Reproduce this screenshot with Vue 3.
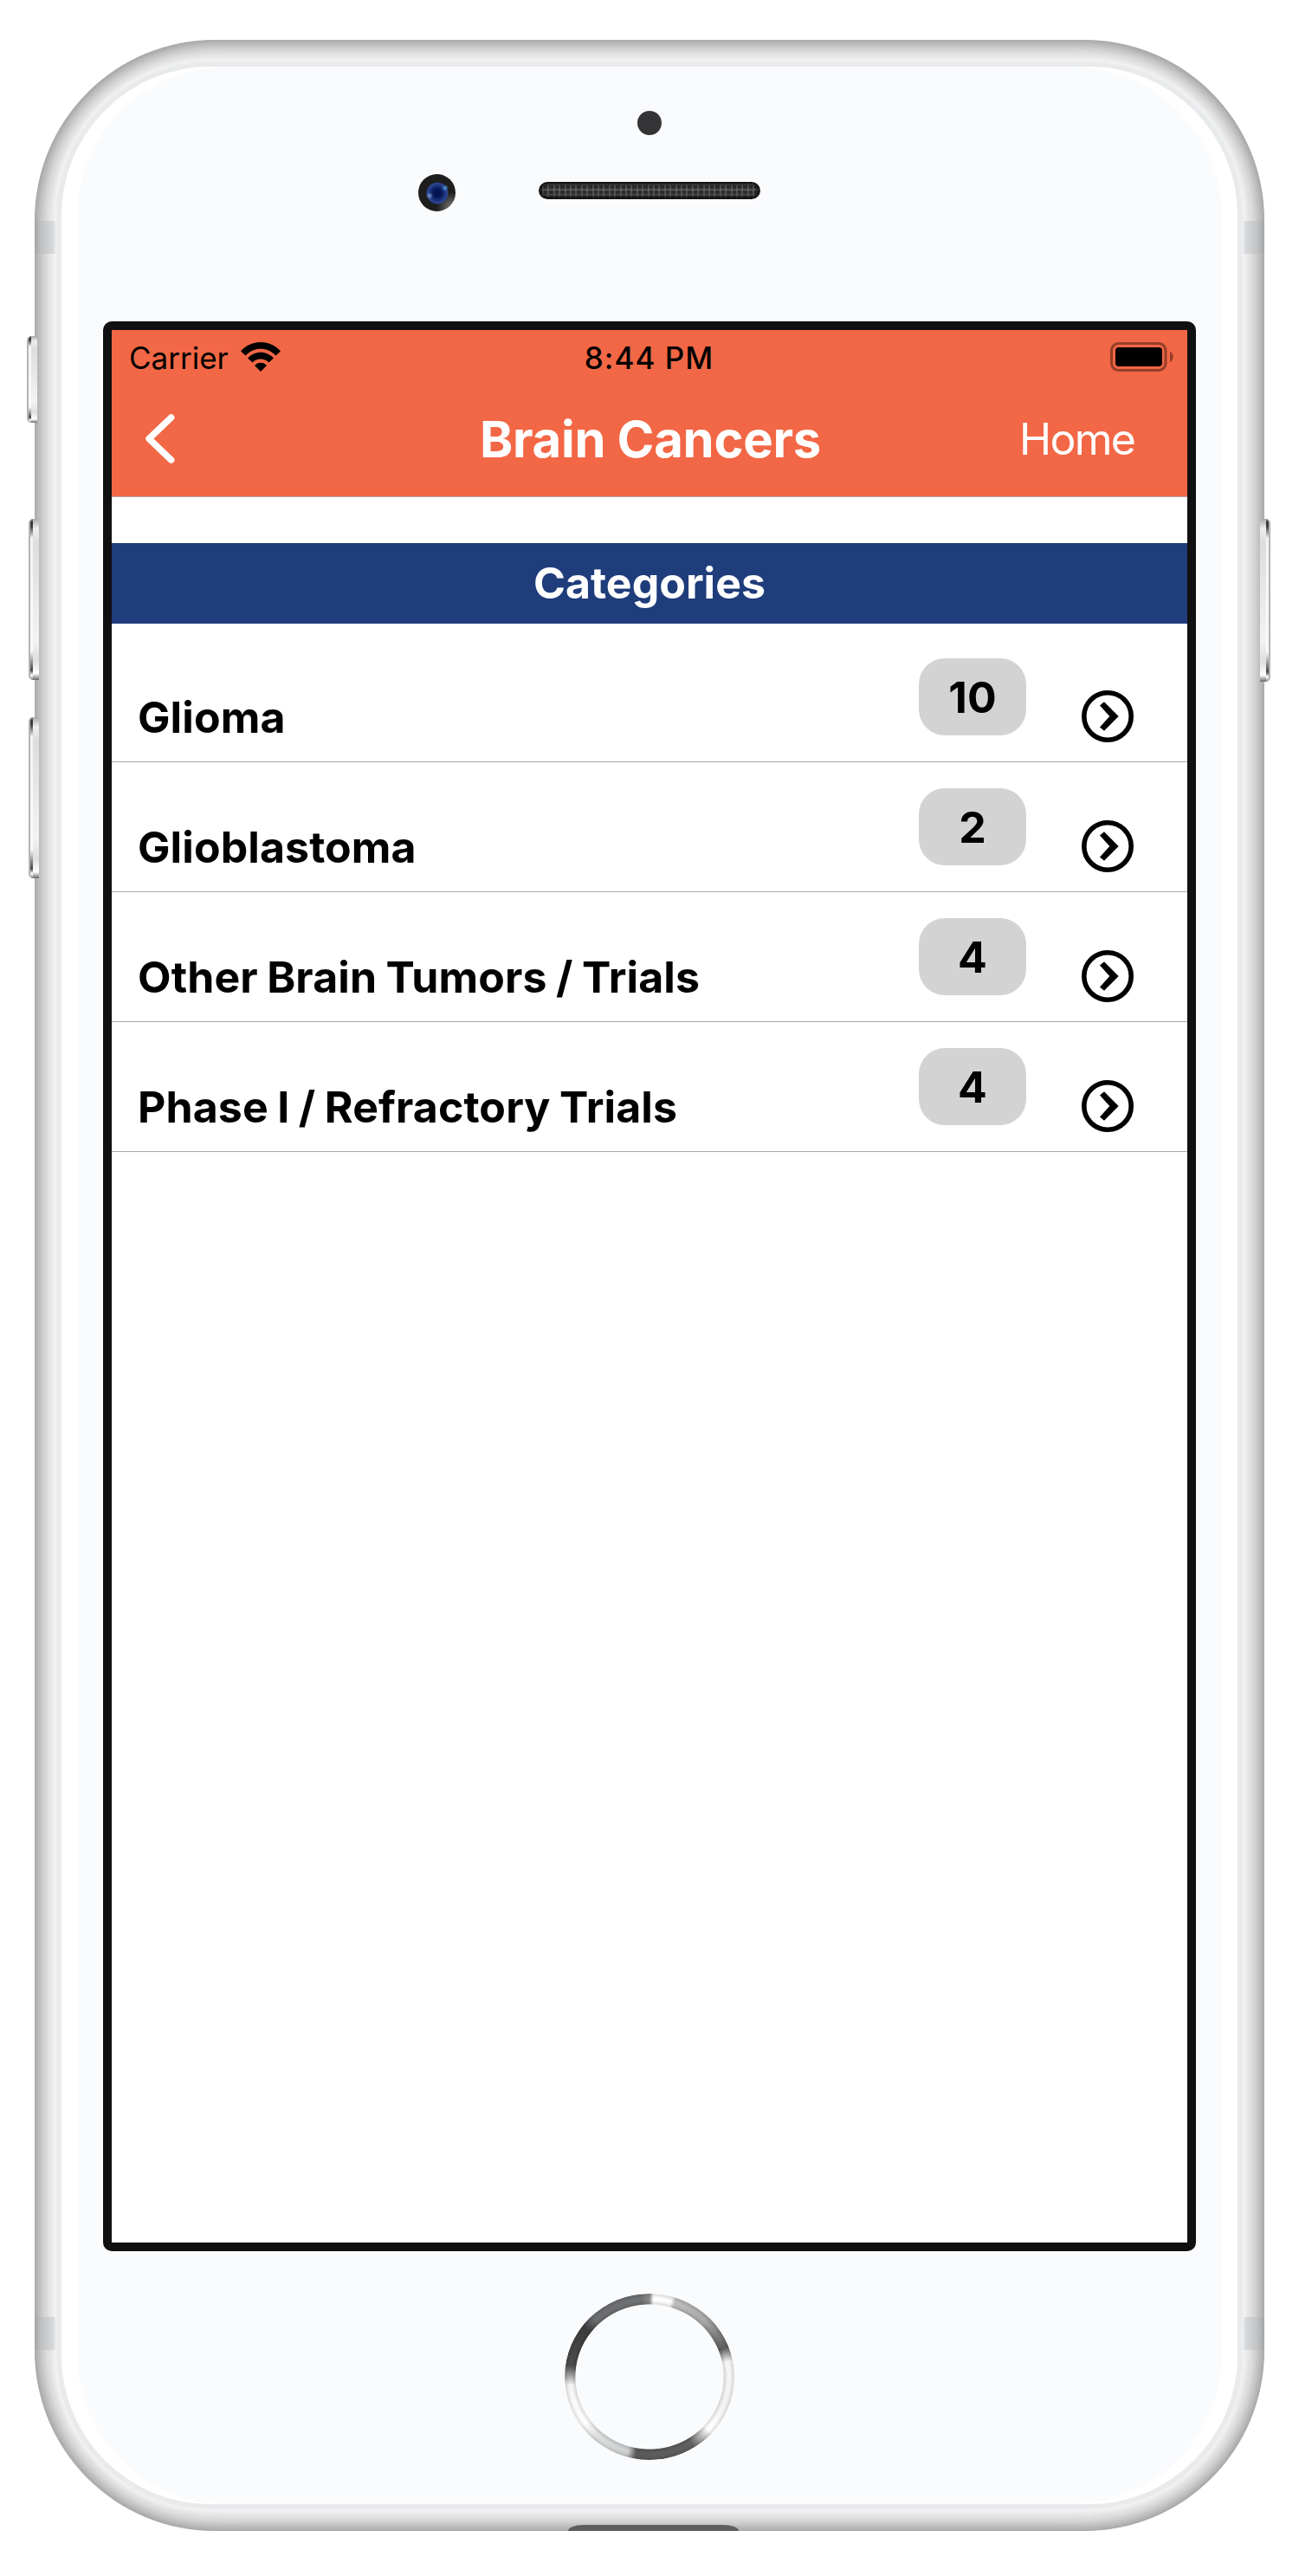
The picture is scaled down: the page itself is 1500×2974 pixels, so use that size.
<script setup>
const categories = [
  { name: 'Glioma', count: 10 },
  { name: 'Glioblastoma', count: 2 },
  { name: 'Other Brain Tumors / Trials', count: 4 },
  { name: 'Phase I / Refractory Trials', count: 4 }
]
</script>

<template>
  <main class="page">
    <div class="phone">
      <i class="key mute"></i>
      <i class="key vol-up"></i>
      <i class="key vol-down"></i>
      <i class="key power"></i>
      <i class="band top-left"></i>
      <i class="band top-right"></i>
      <i class="band bottom-left"></i>
      <i class="band bottom-right"></i>
      <i class="port"></i>

      <div class="face">
        <div class="sensors">
          <i class="proximity"></i>
          <div class="sensor-row">
            <i class="camera"></i>
            <i class="speaker"></i>
          </div>
        </div>

        <div class="screen">
          <header class="header">
            <div class="status">
              <div class="carrier">
                <span class="carrier-name">Carrier</span>
                <svg class="wifi" width="46" height="34" viewBox="0 0 46 34">
                  <path d="M0 10.500C12-3.500 34-3.500 46 10.500L40.500 15.500C31 5 15 5 5.500 15.500Z" />
                  <path d="M8 18.500C16 9.500 30 9.500 38 18.500L32.500 23.500C27.500 18 18.500 18 13.500 23.500Z" />
                  <path d="M16 27C19.500 22.500 26.500 22.500 30 27L23 34Z" />
                </svg>
              </div>
              <span class="time">8:44 PM</span>
              <svg class="battery" width="74" height="34" viewBox="0 0 74 34">
                <rect x="1.500" y="1.500" width="62.500" height="31" rx="8" fill="none" stroke="#953f2a" stroke-width="3" />
                <rect x="6" y="6" width="54" height="22" rx="4" />
                <path d="M69 11C74 13 74 21 69 23Z" fill="#953f2a" />
              </svg>
            </div>
            <nav class="nav">
              <svg class="back" width="34" height="57" viewBox="0 0 34 57">
                <path d="M29.700 4L4 28.500L29.700 53" fill="none" stroke="#fff" stroke-width="7.500" stroke-linecap="round" stroke-linejoin="round" />
              </svg>
              <h1 class="title">Brain Cancers</h1>
              <span class="home">Home</span>
            </nav>
          </header>

          <h2 class="section">Categories</h2>

          <ul class="list">
            <li v-for="category in categories" :key="category.name" class="row">
              <span class="name">{{ category.name }}</span>
              <span class="badge">{{ category.count }}</span>
              <svg class="go" width="60" height="60" viewBox="0 0 60 60">
                <circle cx="30" cy="30" r="27.200" fill="none" stroke="#000" stroke-width="5.600" />
                <path d="M21 17.500L26 13.300L42.700 30L26 46.700L21 42.500L32.300 30Z" />
              </svg>
            </li>
          </ul>
        </div>

        <i class="home-button"></i>
      </div>
    </div>
  </main>
</template>

<style>
body {
  margin: 0;
  background: #fff;
}
</style>

<style scoped>
.page {
  box-sizing: border-box;
  height: 2974px;
  padding: 46px 40px 52px;
  background: #fff;
  font-family: Inter, "Liberation Sans", sans-serif;
  color: #000;
}
.phone {
  position: relative;
  box-sizing: border-box;
  height: 2876px;
  padding: 31px;
  border-radius: 208px;
  background: #f7f7f7;
  box-shadow: inset 0 0 20px 2px rgba(0, 0, 0, 0.36), inset 0 0 44px rgba(0, 0, 0, 0.28);
}
.face {
  display: flex;
  flex-direction: column;
  align-items: center;
  height: 2814px;
  border-radius: 172px;
  background: #fafbfd;
  box-shadow: 0 0 2px 6px #e8eaec, 0 0 4px 8px #f4f5f6, inset 18px 0 3px #fff, inset -18px 0 3px #fff;
}
.sensors {
  display: flex;
  flex-direction: column;
  align-items: center;
  height: 294px;
}
.proximity {
  width: 28px;
  height: 28px;
  margin-top: 51px;
  border-radius: 50%;
  background: #343436;
}
.sensor-row {
  display: flex;
  align-items: center;
  gap: 96px;
  width: 395px;
  height: 43px;
  margin: 45px 139px 0 0;
}
.camera {
  flex: none;
  width: 43px;
  height: 43px;
  border-radius: 50%;
  background:
    radial-gradient(circle at 13px 25px, #7f9bd0 0, rgba(80, 110, 190, 0) 4px),
    radial-gradient(circle at 31px 16px, #4f9bdc 0, rgba(60, 130, 210, 0) 4px),
    radial-gradient(circle at 22px 22px, #02114c 0, #07195a 5px, #2c4796 11.500px, rgba(30, 40, 90, 0) 13px),
    radial-gradient(circle at 38px 38px, #777 0, #1d1d1e 17px);
}
.speaker {
  flex: none;
  box-sizing: border-box;
  width: 256px;
  height: 20px;
  margin-top: -5px;
  border-radius: 10px;
  background:
    repeating-linear-gradient(90deg, transparent 0 4px, rgba(120, 120, 120, 0.5) 4px 6px, transparent 6px 6.400px),
    repeating-linear-gradient(0deg, #2e2e2e 0 4px, #505050 4px 6px);
  box-shadow: inset 0 0 4px 3px #0c0c0c, 0 3px 4px #fff;
}
.screen {
  flex: none;
  box-sizing: border-box;
  width: 1262px;
  height: 2228px;
  border: 10px solid #101010;
  border-radius: 10px;
  background: #fff;
  overflow: hidden;
}
.header {
  height: 192px;
  border-bottom: 1px solid #b2a9a6;
  background: #f26745;
}
.status {
  display: grid;
  grid-template-columns: minmax(0, 1fr) auto minmax(0, 1fr);
  align-items: center;
  height: 61px;
  padding: 0 15px 0 20px;
  font-size: 35px;
  line-height: 42px;
}
.carrier {
  display: flex;
  align-items: center;
  gap: 14px;
}
.carrier-name {
  margin-top: 3px;
}
.time {
  margin: 3px 3px 0 -3px;
  font-weight: 500;
  letter-spacing: 1px;
}
.battery {
  justify-self: end;
}
.nav {
  display: grid;
  grid-template-columns: 200px 1fr 200px;
  align-items: center;
  height: 131px;
  margin-top: -1px;
  padding: 0 61px 0 39px;
  color: #fff;
}
.title {
  margin: 0 -12px 0 12px;
  font-size: 58px;
  font-weight: 700;
  letter-spacing: -0.300px;
  text-align: center;
}
.home {
  justify-self: end;
  font-size: 50px;
  font-weight: 400;
  letter-spacing: -1.800px;
}
.section {
  height: 93px;
  margin: 53px 0 10px;
  background: #1f3c7b;
  color: #fff;
  font-size: 50px;
  font-weight: 700;
  line-height: 93px;
  text-align: center;
}
.list {
  margin: 0;
  padding: 0;
  list-style: none;
}
.row {
  display: flex;
  align-items: flex-start;
  box-sizing: border-box;
  height: 150px;
  padding: 30px 62px 0 30px;
  border-bottom: 1px solid #a8a8a8;
}
.name {
  flex: 1;
  margin-top: 38px;
  font-size: 50px;
  font-weight: 700;
  letter-spacing: 0.100px;
  word-spacing: -1.500px;
  line-height: 60px;
}
.badge {
  width: 124px;
  height: 89px;
  border-radius: 30px;
  background: #d3d3d3;
  font-size: 50px;
  font-weight: 700;
  line-height: 90px;
  text-align: center;
}
.go {
  margin: 37px 0 0 64px;
}
.home-button {
  flex: none;
  width: 196px;
  height: 192px;
  margin-top: 49px;
  border-radius: 50%;
  background:
    radial-gradient(ellipse 98px 96px, rgba(0, 0, 0, 0.12) 88%, transparent 92%, transparent 95%, rgba(0, 0, 0, 0.14) 100%),
    conic-gradient(#8b8b8c 0deg, #fff 3deg, #fafafa 16deg, #bdbdbe 19deg, #a8a8a9 45deg, #5e5e5f 69deg, #f5f5f5 79deg, #f3f3f3 110deg, #fff 132deg, #606061 148deg, #5a5a5b 190deg, #cdcecf 196deg, #dfe0e1 222deg, #fff 235deg, #f5f5f5 264deg, #4c4c4d 278deg, #3c3c3e 307deg, #6c6d6f 316deg, #707173 354deg, #8b8b8c 360deg);
  -webkit-mask: radial-gradient(ellipse 86px 84px, transparent 99%, #000 100%);
  mask: radial-gradient(ellipse 86px 84px, transparent 99%, #000 100%);
}
.key {
  position: absolute;
  box-sizing: border-box;
  width: 12px;
  border-left: 2px solid #b3b4b5;
  border-radius: 5px 0 0 5px;
  background:
    linear-gradient(#aaa 0, #333 2%, #444 5%, #f4f4f5 12%, #fafafa 82%, #444 94%, #fff 97%, #888) 0 0 / 3px 100% no-repeat,
    linear-gradient(#aaa 0, #eee 6%, #dcdddf 15%, #f2f3f5 75%, #dedfe0 88%, #fff 96%, #666);
}
.mute {
  left: -9px;
  top: 342px;
  height: 100px;
}
.vol-up {
  left: -7px;
  top: 553px;
  height: 186px;
}
.vol-down {
  left: -7px;
  top: 782px;
  height: 186px;
}
.power {
  right: -7px;
  top: 553px;
  height: 188px;
  transform: scaleX(-1);
}
.band {
  position: absolute;
  width: 24px;
  height: 38px;
  background: linear-gradient(90deg, #a3a4a5, #bfc0c1 30%, #d8d9da 90%, #e6e7e8);
}
.top-left,
.top-right {
  top: 209px;
}
.bottom-left,
.bottom-right {
  top: 2629px;
}
.top-left,
.bottom-left {
  left: 0;
}
.top-right,
.bottom-right {
  right: 0;
  transform: scaleX(-1);
}
.port {
  position: absolute;
  left: 616px;
  bottom: 0;
  width: 197px;
  height: 7px;
  border-radius: 18px 18px 0 0 / 7px 7px 0 0;
  background: #5e5e5e;
}
</style>
